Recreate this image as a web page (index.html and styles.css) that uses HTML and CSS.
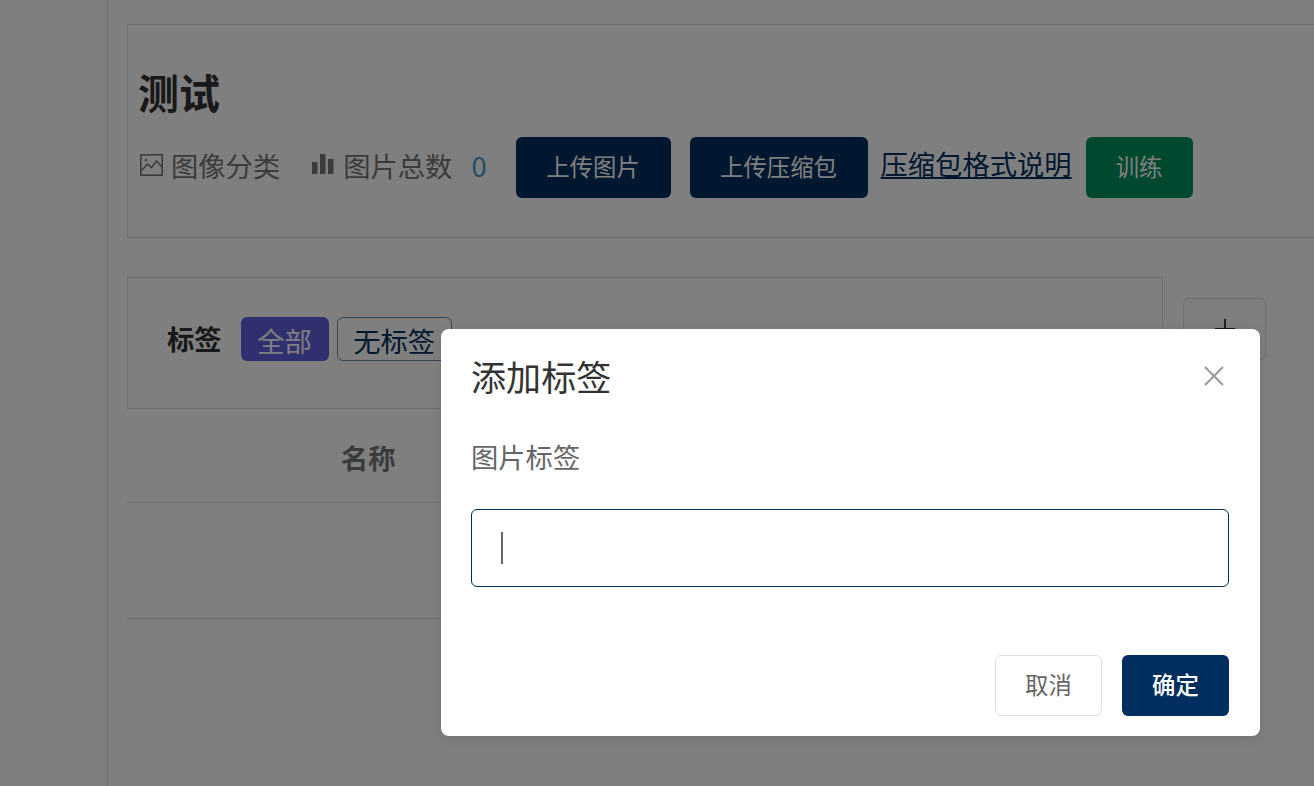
FILE: index.html
```html
<!DOCTYPE html>
<html lang="zh-CN">
<head>
<meta charset="utf-8">
<title>添加标签</title>
<link rel="stylesheet" href="styles.css">
</head>
<body>
<div class="page">
  <aside class="sidebar"></aside>
  <main class="main">
    <section class="info-card">
      <h1 class="title">测试</h1>
      <div class="info-row">
        <span class="meta">
          <svg class="icon-image" viewBox="0 0 23 22" width="23" height="22" fill="none" stroke="currentColor" stroke-width="1.6"><rect x=".8" y=".8" width="21.4" height="20.4"/><path d="M1 17l6.5-7 4 3.5 5-6.5 5.5 6"/><circle cx="6" cy="6" r="1.2" fill="currentColor" stroke="none"/></svg>
          图像分类
        </span>
        <span class="meta meta-count">
          <svg class="icon-bars" viewBox="0 0 22 20" width="22" height="20" fill="currentColor"><rect x="0" y="8" width="5.5" height="12"/><rect x="8" y="0" width="5.5" height="20"/><rect x="16" y="5" width="5.5" height="15"/></svg>
          图片总数
          <b class="count">0</b>
        </span>
        <button class="btn btn-navy btn-upload">上传图片</button>
        <button class="btn btn-navy btn-zip">上传压缩包</button>
        <a class="doc-link" href="#">压缩包格式说明</a>
        <button class="btn btn-green">训练</button>
      </div>
    </section>

    <div class="tag-row">
      <section class="tag-card">
        <strong class="tag-label">标签</strong>
        <span class="chip chip-active">全部</span>
        <span class="chip chip-plain">无标签</span>
      </section>
      <button class="add-tag">
        <svg viewBox="0 0 20 20" width="20" height="20" stroke="currentColor" stroke-width="1.8"><path d="M10 0v20M0 10h20"/></svg>
      </button>
    </div>

    <div class="table">
      <div class="table-head"><span class="col-name">名称</span></div>
      <div class="table-row"></div>
    </div>
  </main>
</div>

<div class="backdrop"></div>
<div class="modal">
  <header class="modal-head">
    <h2 class="modal-title">添加标签</h2>
    <button class="modal-close" aria-label="关闭">
      <svg viewBox="0 0 20 20" width="20" height="20" stroke="currentColor" stroke-width="2" fill="none"><path d="M1 1l18 18M19 1L1 19"/></svg>
    </button>
  </header>
  <div class="modal-body">
    <label class="field-label">图片标签</label>
    <div class="field-input"><span class="caret"></span></div>
  </div>
  <footer class="modal-foot">
    <button class="btn btn-cancel">取消</button>
    <button class="btn btn-ok">确定</button>
  </footer>
</div>
</body>
</html>
```
FILE: styles.css
```css
* { box-sizing: border-box; }
html, body { margin: 0; height: 786px; overflow: hidden; background: #fff; }
body { font-family: "Noto Sans CJK SC", "Noto Sans", sans-serif; color: #333; position: relative; }
button { font: inherit; margin: 0; cursor: pointer; }
h1, h2 { margin: 0; }

.page { display: flex; height: 786px; }
.sidebar { width: 108px; flex: none; border-right: 1px solid #dcdcdc; }
.main { flex: 1; padding: 24px 0 0 19px; }

.info-card { height: 214px; border: 1px solid #dcdcdc; border-right: 0; padding: 38px 10px 0; }
.title { font-size: 40.95px; line-height: 56px; font-weight: 700; color: #333; }
.info-row { display: flex; align-items: flex-start; margin-top: 18px; }
.meta { display: flex; align-items: center; height: 61px; padding-bottom: 6px; font-size: 27.3px; color: #777; }
.meta svg { flex: none; }
.icon-image { margin-left: 2px; margin-right: 8px; }
.meta-count { margin-left: 32px; }
.icon-bars { margin-right: 9px; margin-bottom: 2px; }
.count { font-weight: 400; color: #4a9ad0; margin-left: 19px; }

.btn { height: 61px; border: 0; border-radius: 6px; font-size: 23.4px; display: block; padding: 0 0 4px; }
.btn-navy { background: #002e5f; color: #fff; }
.btn-upload { width: 155px; margin-left: 29px; }
.btn-zip { width: 178px; margin-left: 19px; }
.doc-link { font-size: 27.3px; line-height: 53px; color: #002e5f; margin-left: 13px; text-decoration: underline; white-space: nowrap; }
.btn-green { width: 107px; margin-left: 14px; background: #00935f; color: #fff; }

.tag-row { display: flex; align-items: flex-start; margin-top: 39px; }
.tag-card { width: 1036px; height: 132px; border: 1px solid #dcdcdc; display: flex; align-items: center; padding: 0 0 8px 39px; }
.tag-label { font-size: 27.3px; line-height: 42px; padding-bottom: 2px; color: #333; font-weight: 700; margin-right: 19px; }
.chip { height: 44px; border-radius: 6px; font-size: 27.3px; line-height: 46px; text-align: center; }
.chip-active { width: 88px; background: #6060e0; color: #fff; }
.chip-plain { width: 115px; margin-left: 8px; border: 1px solid #6b8bab; line-height: 44px; color: #002e5f; }
.add-tag { width: 83px; height: 62px; margin: 21px 0 0 20px; background: #fff; border: 1px solid #dcdcdc; border-radius: 6px; color: #333; display: flex; align-items: center; justify-content: center; padding: 0; }

.table { width: 1036px; }
.table-head { height: 94px; display: flex; align-items: center; border-bottom: 1px solid #dcdcdc; padding: 2px 0 0 214px; font-size: 27.3px; font-weight: 700; color: #777; }
.table-row { height: 116px; border-bottom: 1px solid #dcdcdc; }

.backdrop { position: absolute; inset: 0; background: rgba(0, 0, 0, .5); }
.modal { position: absolute; left: 441px; top: 329px; width: 819px; height: 407px; background: #fff; border-radius: 8px; box-shadow: 0 2px 12px rgba(0, 0, 0, .1); display: flex; flex-direction: column; padding: 0 31px 20px 30px; }
.modal-head { display: flex; justify-content: space-between; align-items: flex-start; padding-top: 22px; }
.modal-title { font-size: 35.1px; line-height: 50px; font-weight: 400; color: #333; }
.modal-close { border: 0; background: none; padding: 0; color: #999; margin: 15px 5px 0 0; width: 20px; height: 20px; }
.modal-body { flex: 1; padding-top: 36px; }
.field-label { display: block; font-size: 27.3px; line-height: 38px; color: #666; }
.field-input { height: 78px; margin-top: 34px; border: 1px solid #002e5f; border-radius: 6px; display: flex; align-items: center; padding-left: 29px; }
.caret { width: 2px; height: 32px; background: #666; }
.modal-foot { display: flex; justify-content: flex-end; gap: 20px; }
.btn-cancel { width: 107px; background: #fff; border: 1px solid #dcdfe6; color: #666; }
.btn-ok { width: 107px; background: #002e5f; color: #fff; font-weight: 500; }
```
